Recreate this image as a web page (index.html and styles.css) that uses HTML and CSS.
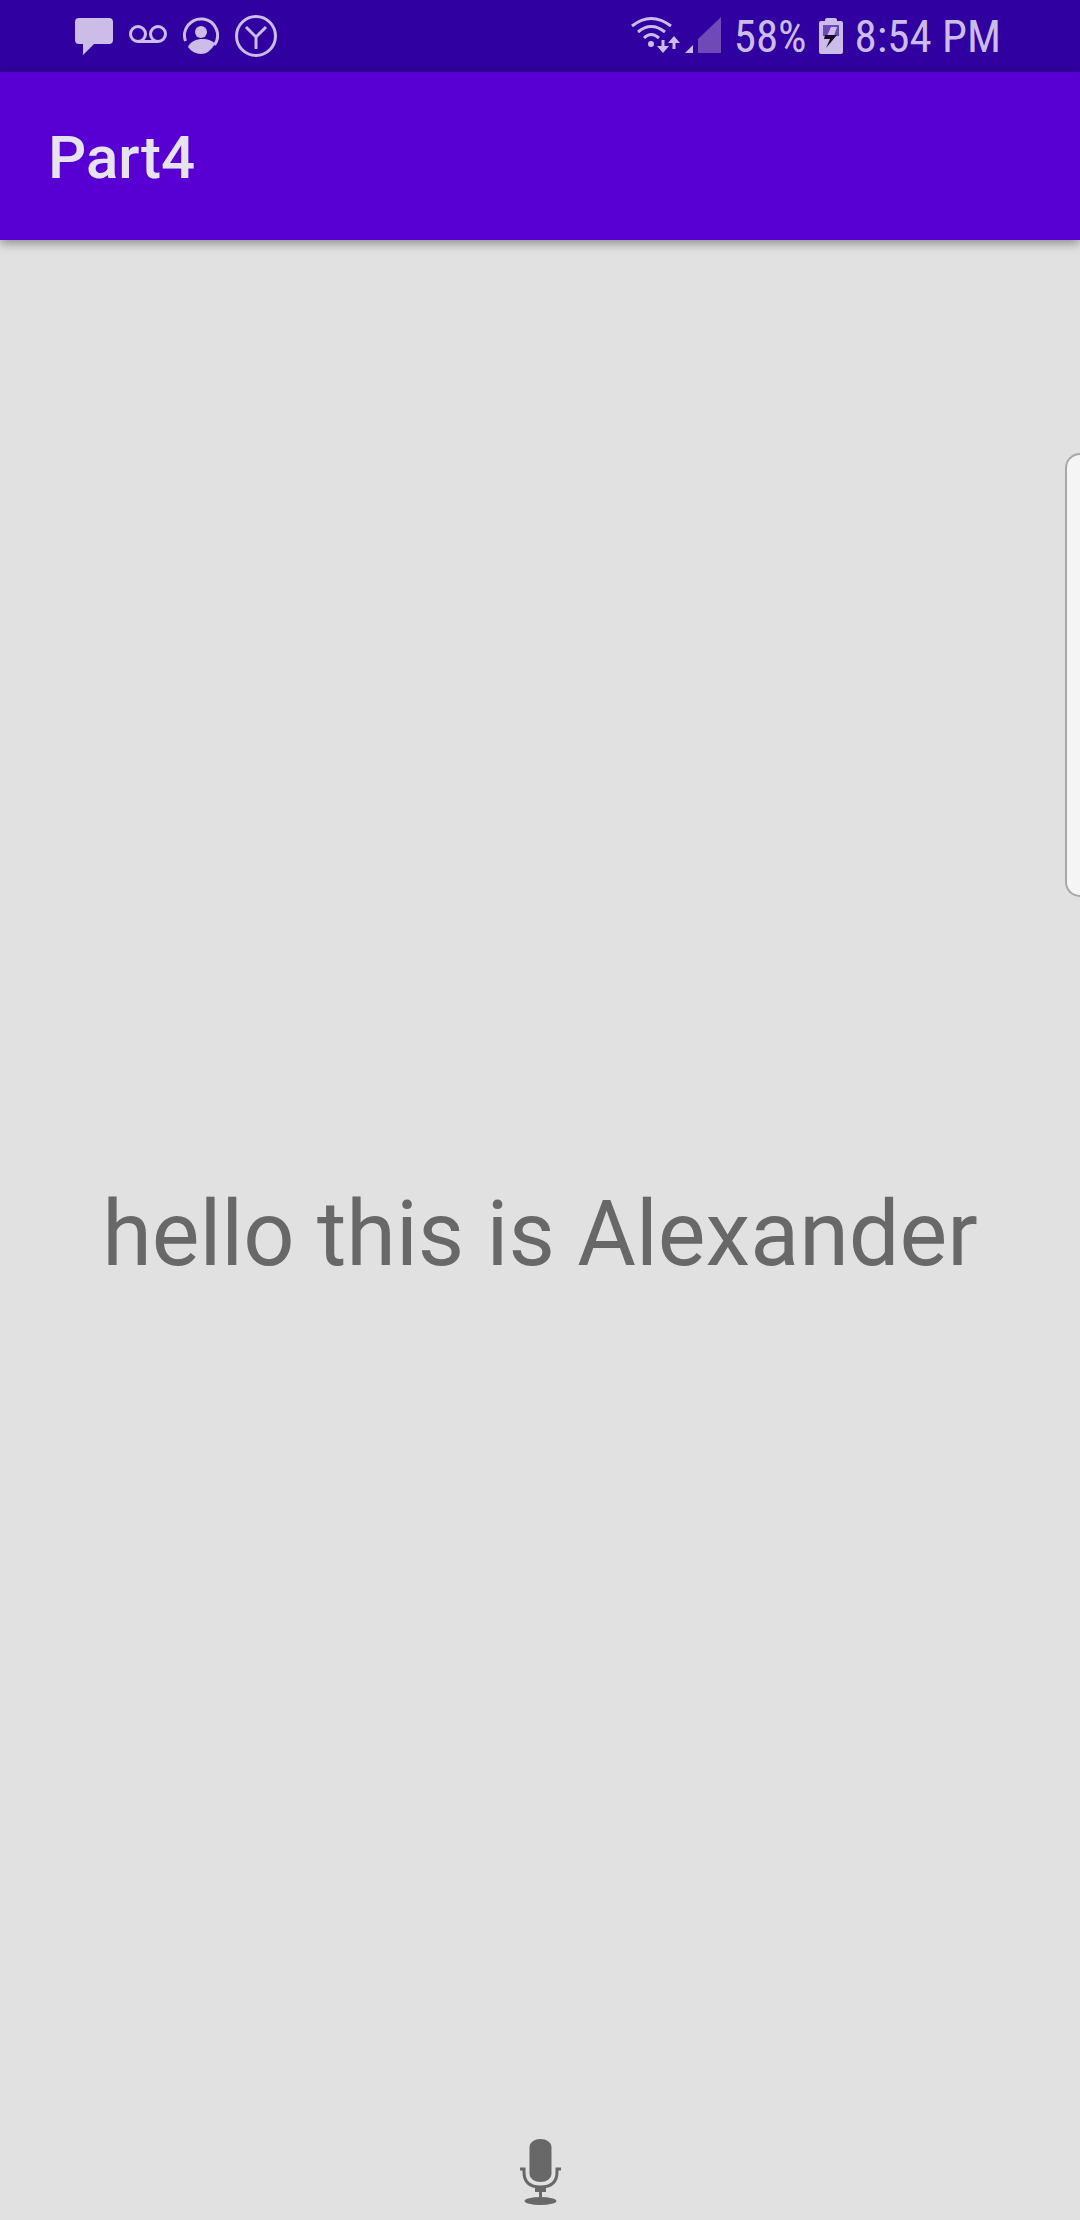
FILE: index.html
```html
<!DOCTYPE html>
<html lang="en">
<head>
<meta charset="utf-8">
<meta name="viewport" content="width=device-width, initial-scale=1">
<title>Part4</title>
<link rel="stylesheet" href="styles.css">
</head>
<body>
<div class="status-bar">
  <div class="notifications">
    <svg width="38" height="38" viewBox="0 0 38 38" aria-label="Message"><path d="M4 1H34Q38 1 38 5V23Q38 27 34 27H19L8 38V27H4Q0 27 0 23V5Q0 1 4 1Z"/></svg>
    <svg class="line" width="38" height="38" viewBox="0 0 38 38" aria-label="Voicemail"><circle cx="9" cy="17" r="7.500"/><circle cx="29" cy="17" r="7.500"/><path d="M9 24.500H29"/></svg>
    <svg width="36" height="38" viewBox="0 0 36 38" aria-label="Account"><circle cx="18" cy="15" r="6"/><path d="M5 30C9 20 27 20 32 27Q26 37 18 37Q10 37 5 30Z"/><path class="ring" d="M2.500 24A16.500 16.500 0 1 1 31.500 28"/></svg>
    <svg class="line" width="42" height="42" viewBox="0 0 42 42" aria-label="Y"><circle cx="21" cy="21" r="19.500"/><path d="M11 12L21 22L31 12M21 21V34"/></svg>
  </div>
  <div class="system">
    <svg width="48" height="38" viewBox="0 0 48 38" aria-label="Wi-Fi"><g class="ring"><path d="M1 9Q20-6 40 9M7 15Q20 4 34 15M13 21Q20 14 28 21"/></g><circle cx="20" cy="27" r="3"/><path class="ring" d="M32 23V32M43 32V23"/><path d="M26 29H38L32 36ZM37 26L43 19L49 26Z"/></svg>
    <svg width="37" height="38" viewBox="0 0 37 38" aria-label="Signal"><path d="M0 36L8 28V36Z"/><path class="dim" d="M13 36V22L36 0V36Z"/></svg>
    <span class="percent">58%</span>
    <svg width="24" height="38" viewBox="0 0 24 38" aria-label="Battery charging"><path d="M2 4H6V3Q6 1 8 1H16Q18 1 18 3V4H22Q24 4 24 6V35Q24 37 22 37H2Q0 37 0 35V6Q0 4 2 4Z"/><path class="empty" d="M4 8H20V19H4Z"/><path d="M12 10H18L15 19H8Z"/><path class="bolt" d="M6 18H18L7 31L11 22H5Z"/></svg>
    <span class="time">8:54 PM</span>
  </div>
</div>
<header class="app-bar"><h1>Part4</h1></header>
<main>
  <p class="speech">hello this is Alexander</p>
  <button class="mic" type="button" aria-label="Speak">
    <svg width="41" height="66" viewBox="0 0 41 66"><rect x="9.500" y="0" width="22" height="43" rx="11" ry="8"/><path class="cradle" d="M0 30H4V33C4 43 10 48 20.500 48S37 43 37 33V30H41"/><path d="M15 48H26V53H22V58H19V53H15Z"/><ellipse cx="20.500" cy="62" rx="16" ry="4"/></svg>
  </button>
</main>
<div class="edge-panel"></div>
</body>
</html>
```
FILE: styles.css
```css
* { box-sizing: border-box; }
body {
  margin: 0;
  min-height: 100vh;
  display: flex;
  flex-direction: column;
  background: #e1e1e1;
  font-family: Roboto, sans-serif;
  overflow-x: hidden;
}
svg { display: block; flex: none; }
.status-bar {
  height: 72px;
  padding: 0 79px 0 75px;
  display: flex;
  align-items: center;
  justify-content: space-between;
  background: #3100a0;
  color: #cbbde8;
  fill: currentColor;
  font-family: "Roboto Condensed", Roboto, sans-serif;
  font-size: 45px;
  line-height: 72px;
  white-space: nowrap;
}
.notifications { display: flex; align-items: center; gap: 16px; }
.line, .ring { fill: none; stroke: currentColor; stroke-width: 3; }
.system { display: flex; align-items: center; gap: 12px; }
.system svg:first-child { margin-right: -6px; overflow: visible; }
.percent, .time { padding-top: 2px; }
.dim, .empty { fill: #7049b8; }
.bolt { fill: #150c28; }
.app-bar {
  height: 168px;
  padding: 4px 48px 0;
  display: flex;
  align-items: center;
  background: #5800d4;
  box-shadow: 0 3px 10px rgba(0, 0, 0, 0.4);
}
h1 { margin: 0; color: #e7e3ed; font-size: 60px; font-weight: 500; line-height: 72px; }
main {
  flex: 1;
  padding-top: 10px;
  display: grid;
  grid-template-rows: 1fr auto 1fr;
  justify-items: center;
}
.speech {
  grid-row: 2;
  margin: 0;
  color: #686868;
  font-size: 90px;
  line-height: 108px;
  text-align: center;
}
.mic {
  grid-row: 3;
  align-self: end;
  margin: 0;
  padding: 0 0 15px;
  border: 0;
  background: none;
  color: #686868;
  fill: currentColor;
}
.cradle { fill: none; stroke: currentColor; stroke-width: 3; }
.edge-panel {
  position: absolute;
  top: 453px;
  right: 0;
  width: 15px;
  height: 444px;
  border: 2px solid #a8a8a8;
  border-right: 0;
  border-radius: 20px 0 0 20px;
  background: #f5f5f5;
}
```
